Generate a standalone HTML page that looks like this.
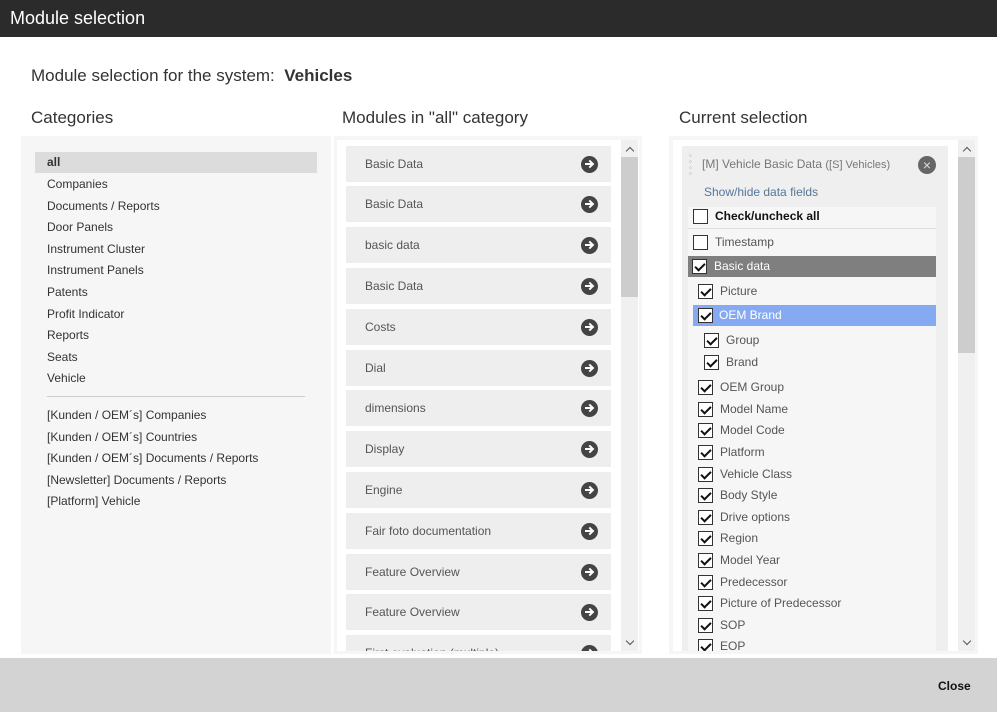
<!DOCTYPE html>
<html><head><meta charset="utf-8"><style>
*{box-sizing:border-box;margin:0;padding:0}
body{width:997px;height:712px;position:relative;font-family:"Liberation Sans",Arial,sans-serif;background:#fff;overflow:hidden;color:#333}
.a{position:absolute}
.hdr{left:0;top:0;width:997px;height:37px;background:#2b2b2b;color:#fff;font-size:18px;line-height:37px;padding-left:10px}
.ft{left:0;top:658px;width:997px;height:54px;background:#d3d3d3}
.cat{font-size:12px;color:#333;left:47px}
.mod{left:346px;width:265px;height:36px;background:#eee;font-size:12px;color:#555;line-height:36px;padding-left:19px}
.arr{position:absolute;right:13px;top:10px;width:17px;height:17px;border-radius:50%;background:#444}
.sb{background:#f0f0f0}
.row{font-size:12px;color:#555;height:21px;line-height:21px}
.cb{position:absolute;width:15px;height:15px;border:1px solid #333;background:#fff;top:3px}
.cb.c::after{content:"";position:absolute;left:4px;top:1px;width:4px;height:8px;border:solid #111;border-width:0 2.5px 2.5px 0;transform:rotate(45deg)}
.up,.dn{position:absolute;width:6px;height:6px;border:solid #555;border-width:1.5px 1.5px 0 0}
.up{transform:rotate(-45deg)}.dn{transform:rotate(135deg)}
</style></head><body>
<div class="a hdr">Module selection</div>
<div class="a" style="left:31px;top:66px;font-size:17px;color:#333">Module selection for the system:&nbsp; <b>Vehicles</b></div>
<div class="a" style="left:31px;top:108px;font-size:17px;color:#333">Categories</div>
<div class="a" style="left:342px;top:108px;font-size:17px;color:#333">Modules in "all" category</div>
<div class="a" style="left:679px;top:108px;font-size:17px;color:#333">Current selection</div>

<div class="a" style="left:21px;top:136px;width:310px;height:518px;background:#f6f6f6"></div>
<div class="a" style="left:35px;top:152px;width:282px;height:21px;background:#dcdcdc"></div>
<div class="a cat" style="top:155px;font-weight:bold">all</div>
<div class="a cat" style="top:177px">Companies</div>
<div class="a cat" style="top:199px">Documents / Reports</div>
<div class="a cat" style="top:220px">Door Panels</div>
<div class="a cat" style="top:242px">Instrument Cluster</div>
<div class="a cat" style="top:263px">Instrument Panels</div>
<div class="a cat" style="top:285px">Patents</div>
<div class="a cat" style="top:307px">Profit Indicator</div>
<div class="a cat" style="top:328px">Reports</div>
<div class="a cat" style="top:350px">Seats</div>
<div class="a cat" style="top:371px">Vehicle</div>
<div class="a" style="left:47px;top:396px;width:258px;height:1px;background:#ccc"></div>
<div class="a cat" style="top:408px">[Kunden / OEM´s] Companies</div>
<div class="a cat" style="top:430px">[Kunden / OEM´s] Countries</div>
<div class="a cat" style="top:451px">[Kunden / OEM´s] Documents / Reports</div>
<div class="a cat" style="top:473px">[Newsletter] Documents / Reports</div>
<div class="a cat" style="top:494px">[Platform] Vehicle</div>

<div class="a" style="left:334px;top:136px;width:308px;height:518px;background:#f6f6f6"></div>
<div class="a" style="left:337px;top:140px;width:302px;height:511px;background:#fff"></div>
<div class="a" style="left:337px;top:140px;width:284px;height:511px;overflow:hidden">
<div class="a mod" style="left:9px;top:6px">Basic Data<span class="arr"></span></div>
<div class="a mod" style="left:9px;top:46px">Basic Data<span class="arr"></span></div>
<div class="a mod" style="left:9px;top:87px">basic data<span class="arr"></span></div>
<div class="a mod" style="left:9px;top:128px">Basic Data<span class="arr"></span></div>
<div class="a mod" style="left:9px;top:169px">Costs<span class="arr"></span></div>
<div class="a mod" style="left:9px;top:210px">Dial<span class="arr"></span></div>
<div class="a mod" style="left:9px;top:250px">dimensions<span class="arr"></span></div>
<div class="a mod" style="left:9px;top:291px">Display<span class="arr"></span></div>
<div class="a mod" style="left:9px;top:332px">Engine<span class="arr"></span></div>
<div class="a mod" style="left:9px;top:373px">Fair foto documentation<span class="arr"></span></div>
<div class="a mod" style="left:9px;top:414px">Feature Overview<span class="arr"></span></div>
<div class="a mod" style="left:9px;top:454px">Feature Overview<span class="arr"></span></div>
<div class="a mod" style="left:9px;top:495px">First evaluation (multiple)<span class="arr"></span></div>
</div>
<div class="a sb" style="left:621px;top:140px;width:17px;height:511px"></div>
<div class="a" style="left:621px;top:157px;width:17px;height:140px;background:#cdcdcd"></div>
<span class="up" style="left:627px;top:148px"></span>
<span class="dn" style="left:627px;top:638px"></span>

<div class="a" style="left:669px;top:136px;width:309px;height:518px;background:#f6f6f6"></div>
<div class="a" style="left:673px;top:140px;width:285px;height:511px;background:#fff"></div>
<div class="a" style="left:682px;top:146px;width:266px;height:505px;background:#efefef"></div>
<div class="a" style="left:689px;top:153px;font-size:8px;line-height:6px;color:#999">◦<br>◦<br>◦<br>◦</div>
<div class="a" style="left:702px;top:157px;font-size:12px;color:#777">[M] Vehicle Basic Data <span style="font-size:11px">([S] Vehicles)</span></div>
<div class="a" style="left:918px;top:156px;width:18px;height:18px;border-radius:50%;background:#666;color:#ddd;font-size:14px;line-height:18px;text-align:center">×</div>
<div class="a" style="left:704px;top:185px;font-size:12px;color:#557799">Show/hide data fields</div>
<div class="a" style="left:688px;top:207px;width:248px;height:444px;background:#f6f6f6"></div>
<div class="a" style="left:688px;top:228px;width:248px;height:1px;background:#ddd"></div>
<div class="a row" style="left:693px;top:206px;width:243px;color:#111;font-weight:bold"><span class="cb" style="left:0"></span><span style="padding-left:22px">Check/uncheck all</span></div>
<div class="a row" style="left:693px;top:232px;width:243px"><span class="cb" style="left:0"></span><span style="padding-left:22px">Timestamp</span></div>
<div class="a row" style="left:688px;top:256px;width:248px;background:#7f7f7f;color:#fff"><span class="cb c" style="left:4px"></span><span style="padding-left:26px">Basic data</span></div>
<div class="a row" style="left:698px;top:281px"><span class="cb c" style="left:0"></span><span style="padding-left:22px">Picture</span></div>
<div class="a row" style="left:693px;top:305px;width:243px;background:#86aaf2;color:#fff"><span class="cb c" style="left:5px"></span><span style="padding-left:26px">OEM Brand</span></div>
<div class="a row" style="left:704px;top:330px"><span class="cb c" style="left:0"></span><span style="padding-left:22px">Group</span></div>
<div class="a row" style="left:704px;top:352px"><span class="cb c" style="left:0"></span><span style="padding-left:22px">Brand</span></div>
<div class="a row" style="left:698px;top:377px"><span class="cb c" style="left:0"></span><span style="padding-left:22px">OEM Group</span></div>
<div class="a row" style="left:698px;top:399px"><span class="cb c" style="left:0"></span><span style="padding-left:22px">Model Name</span></div>
<div class="a row" style="left:698px;top:420px"><span class="cb c" style="left:0"></span><span style="padding-left:22px">Model Code</span></div>
<div class="a row" style="left:698px;top:442px"><span class="cb c" style="left:0"></span><span style="padding-left:22px">Platform</span></div>
<div class="a row" style="left:698px;top:464px"><span class="cb c" style="left:0"></span><span style="padding-left:22px">Vehicle Class</span></div>
<div class="a row" style="left:698px;top:485px"><span class="cb c" style="left:0"></span><span style="padding-left:22px">Body Style</span></div>
<div class="a row" style="left:698px;top:507px"><span class="cb c" style="left:0"></span><span style="padding-left:22px">Drive options</span></div>
<div class="a row" style="left:698px;top:528px"><span class="cb c" style="left:0"></span><span style="padding-left:22px">Region</span></div>
<div class="a row" style="left:698px;top:550px"><span class="cb c" style="left:0"></span><span style="padding-left:22px">Model Year</span></div>
<div class="a row" style="left:698px;top:572px"><span class="cb c" style="left:0"></span><span style="padding-left:22px">Predecessor</span></div>
<div class="a row" style="left:698px;top:593px"><span class="cb c" style="left:0"></span><span style="padding-left:22px">Picture of Predecessor</span></div>
<div class="a row" style="left:698px;top:615px"><span class="cb c" style="left:0"></span><span style="padding-left:22px">SOP</span></div>
<div class="a" style="left:688px;top:636px;width:248px;height:15px;overflow:hidden"><div class="row" style="position:relative;left:10px;top:0"><span class="cb c" style="left:0"></span><span style="padding-left:22px">EOP</span></div></div>
<div class="a sb" style="left:958px;top:140px;width:17px;height:511px"></div>
<div class="a" style="left:958px;top:157px;width:17px;height:196px;background:#cdcdcd"></div>
<span class="up" style="left:964px;top:148px"></span>
<span class="dn" style="left:964px;top:638px"></span>

<div class="a ft"></div>
<div class="a" style="left:938px;top:679px;font-size:12px;font-weight:bold;color:#111">Close</div>
<style>.arr::after{content:"";position:absolute;left:4px;top:7px;width:7px;height:2px;background:#fff}.arr::before{content:"";position:absolute;left:6px;top:5px;width:4px;height:4px;border:solid #fff;border-width:2px 2px 0 0;transform:rotate(45deg)}</style>
</body></html>
